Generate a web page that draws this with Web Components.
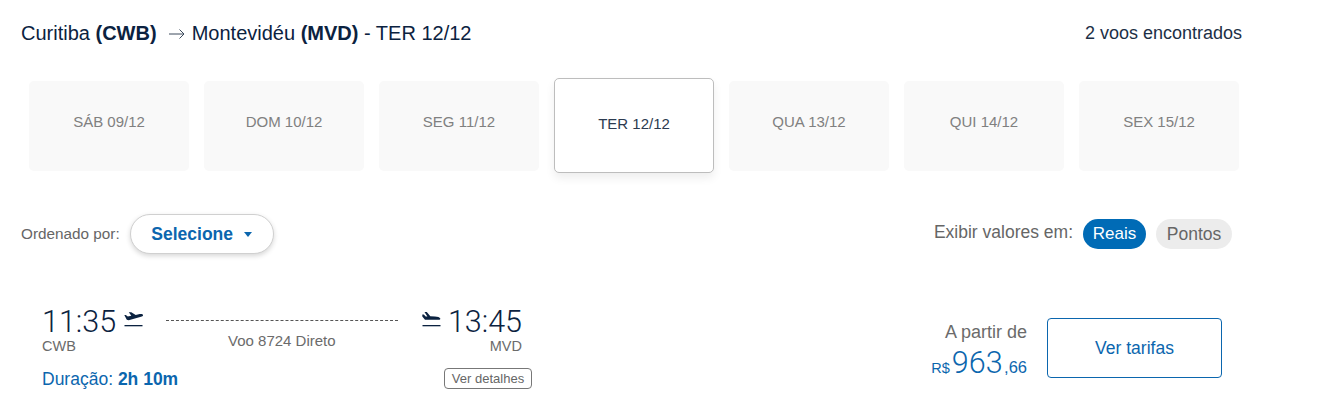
<!DOCTYPE html>
<html lang="pt-BR">
<head>
<meta charset="utf-8">
<title>Voos</title>
<style>
    html, body { margin: 0; background: #fff; }
    body { font-family: 'Liberation Sans', Arial, sans-serif; color: #0b2240; width: 1317px; height: 406px; overflow: hidden; }
    flight-page { display: block; }
</style>
</head>
<body>
<flight-page>
    <route-header count="2 voos encontrados">
        Curitiba <b>(CWB)</b> <arrow-icon></arrow-icon> Montevidéu <b>(MVD)</b> - TER 12/12
    </route-header>
    <date-strip>
        <date-tab>SÁB 09/12</date-tab>
        <date-tab>DOM 10/12</date-tab>
        <date-tab>SEG 11/12</date-tab>
        <date-tab active>TER 12/12</date-tab>
        <date-tab>QUA 13/12</date-tab>
        <date-tab>QUI 14/12</date-tab>
        <date-tab>SEX 15/12</date-tab>
    </date-strip>
    <filter-bar></filter-bar>
    <flight-card dep="11:35" arr="13:45" from="CWB" to="MVD" info="Voo 8724 Direto" duration="2h 10m" price="963" cents=",66"></flight-card>
</flight-page>

<script>
const plane_svg = (landing) => `
    <svg width="19" height="15" viewBox="0 0 19 15" aria-hidden="true">
        <path fill="#0b2240" d="${landing
            ? 'M2.500 0h2.300l3.500 4.200 4.600.3c2.600.2 5 .8 5.400 1.900.2.900-.5 1.300-1.700 1.300H3L.3 4.500V2.600h1.500l1.900 1.800h1.700z'
            : 'M.3 3h1.500l2 1.500 3.500-.7L4.800.2h2.500l4.400 2.800 4.100-.9c1.600-.3 3 0 3.200.9.200.9-.6 1.400-2 1.800L4.700 8.300 2.800 7.800z'}"/>
        <rect x="0.500" y="13" width="18" height="1.300" fill="#0b2240"/>
    </svg>`;

class ArrowIcon extends HTMLElement {
    constructor() {
        super();
        this.attachShadow({mode: 'open'});
        this.shadowRoot.innerHTML = `
            <style>
                :host { display: inline-block; width: 17px; height: 12px; margin: 0 1px 0 6px; }
                svg { display: block; }
            </style>
            <svg width="17" height="12" viewBox="0 0 17 12" aria-hidden="true">
                <path d="M1 6h15M11.500 1.500 16 6l-4.500 4.500" fill="none" stroke="#3c4a5c" stroke-width="1"/>
            </svg>`;
    }
}

class RouteHeader extends HTMLElement {
    constructor() {
        super();
        this.attachShadow({mode: 'open'});
        this.shadowRoot.innerHTML = `
            <style>
                :host { display: flex; justify-content: space-between; align-items: center; height: 66px; padding: 0 75px 0 21px; font-size: 20px; color: #0b2240; }
                #count { font-size: 18px; color: #1c2f46; }
            </style>
            <div><slot></slot></div>
            <div id="count"></div>`;
    }
    connectedCallback() {
        this.shadowRoot.getElementById('count').innerText = this.getAttribute('count');
    }
}

class DateStrip extends HTMLElement {
    constructor() {
        super();
        this.attachShadow({mode: 'open'});
        this.shadowRoot.innerHTML = `
            <style>
                :host { display: flex; align-items: center; gap: 15px; height: 95px; padding: 12px 0 0 29px; }
            </style>
            <slot></slot>`;
    }
}

class DateTab extends HTMLElement {
    constructor() {
        super();
        this.attachShadow({mode: 'open'});
        this.shadowRoot.innerHTML = `
            <style>
                :host { display: flex; justify-content: center; align-items: center; box-sizing: border-box; width: 160px; height: 90px; padding-bottom: 8px; background: #f9f9f9; border-radius: 5px; font-size: 15px; color: #808080; }
                :host([active]) { height: 95px; padding-bottom: 4px; background: #fff; border: 1px solid #bdbdbd; color: #2c3b50; box-shadow: 0 5px 10px rgba(0,0,0,.07); }
            </style>
            <slot></slot>`;
    }
}

class FilterBar extends HTMLElement {
    constructor() {
        super();
        this.attachShadow({mode: 'open'});
        this.shadowRoot.innerHTML = `
            <style>
                :host { display: flex; justify-content: space-between; align-items: center; height: 40px; margin-top: 41px; padding: 0 85px 0 21px; font-size: 15.300px; color: #666; }
                .side { display: flex; align-items: center; }
                #select { display: flex; align-items: center; justify-content: center; gap: 11px; box-sizing: border-box; width: 144px; height: 40px; margin-left: 10px; border: 1px solid #d0d0d0; border-radius: 20px; background: #fff; box-shadow: 0 2px 5px rgba(0,0,0,.16); color: #0b66ae; font-size: 17.500px; font-weight: 700; }
                #caret { width: 0; height: 0; border: 4.500px solid transparent; border-top: 5px solid #0b66ae; border-bottom: 0; }
                #show { font-size: 17.500px; margin-top: -4px; margin-right: 10px; }
                .pill { display: flex; align-items: center; justify-content: center; height: 30px; border-radius: 15px; font-size: 17.500px; }
                #reais { width: 63px; font-size: 17px; background: #006bb6; color: #fff; }
                #pontos { width: 76px; margin-left: 10px; background: #ececec; color: #666; }
            </style>
            <div class="side">
                <span>Ordenado por:</span>
                <div id="select">Selecione <span id="caret"></span></div>
            </div>
            <div class="side">
                <span id="show">Exibir valores em:</span>
                <div class="pill" id="reais">Reais</div>
                <div class="pill" id="pontos">Pontos</div>
            </div>`;
    }
}

class FlightCard extends HTMLElement {
    constructor() {
        super();
        this.attachShadow({mode: 'open'});
        this.shadowRoot.innerHTML = `
            <style>
                :host { display: flex; justify-content: space-between; height: 100px; margin-top: 51px; padding: 0 95px 0 42px; }
                #left { width: 490px; display: flex; flex-direction: column; }
                #times { display: flex; align-items: center; height: 33px; }
                .time { font-family: Roboto, sans-serif; font-weight: 300; font-size: 30.500px; line-height: 32px; color: #0b2240; }
                svg { display: block; }
                #dep-icon { margin: -4px 0 0 8px; }
                #arr-icon { margin: -4px 7px 0 0; }
                #line { flex: 1; border-top: 1px dashed #555; margin: -3px 24px 0 23px; }
                #labels { display: flex; justify-content: space-between; align-items: center; height: 16px; font-size: 14.500px; color: #6b6b6b; }
                #info { font-size: 15px; margin: -12px 2px 0 0; }
                #to { margin-right: 10px; }
                #bottom { display: flex; justify-content: space-between; align-items: center; margin-top: 12px; height: 24px; }
                #duration { font-size: 17.500px; margin-top: 2px; color: #0b66ae; }
                #details { box-sizing: border-box; height: 21px; width: 88px; text-align: center; border: 1px solid #777; border-radius: 4px; font-size: 13px; line-height: 19px; color: #666; }
                #right { display: flex; align-items: flex-start; padding-top: 13px; }
                #price { text-align: right; margin-right: 20px; }
                #from-label { font-size: 18px; color: #6b6b6b; line-height: 20px; margin-top: 4px; }
                #amount { color: #0b66ae; line-height: 34px; font-size: 14.500px; margin-top: 4px; }
                #value { font-family: Roboto, sans-serif; font-weight: 300; font-size: 30.500px; margin: 0 1.500px 0 2px; }
                #cents { font-size: 16.500px; }
                #tarifas { display: flex; justify-content: center; align-items: center; box-sizing: border-box; width: 175px; height: 60px; border: 1px solid #0b66ae; border-radius: 4px; color: #0b66ae; font-size: 17.500px; }
            </style>
            <div id="left">
                <div id="times">
                    <span class="time" id="dep"></span>
                    <span id="dep-icon">${plane_svg(false)}</span>
                    <span id="line"></span>
                    <span id="arr-icon">${plane_svg(true)}</span>
                    <span class="time" id="arr"></span>
                    <span style="width:10px"></span>
                </div>
                <div id="labels">
                    <span id="from"></span>
                    <span id="info"></span>
                    <span id="to"></span>
                </div>
                <div id="bottom">
                    <div id="duration">Duração: <b id="dur"></b></div>
                    <div id="details">Ver detalhes</div>
                </div>
            </div>
            <div id="right">
                <div id="price">
                    <div id="from-label">A partir de</div>
                    <div id="amount">R$<span id="value"></span><span id="cents"></span></div>
                </div>
                <div id="tarifas">Ver tarifas</div>
            </div>`;
    }
    connectedCallback() {
        const root = this.shadowRoot;
        root.getElementById('dep').innerText = this.getAttribute('dep');
        root.getElementById('arr').innerText = this.getAttribute('arr');
        root.getElementById('from').innerText = this.getAttribute('from');
        root.getElementById('to').innerText = this.getAttribute('to');
        root.getElementById('info').innerText = this.getAttribute('info');
        root.getElementById('dur').innerText = this.getAttribute('duration');
        root.getElementById('value').innerText = this.getAttribute('price');
        root.getElementById('cents').innerText = this.getAttribute('cents');
    }
}

window.customElements.define('arrow-icon', ArrowIcon);
window.customElements.define('route-header', RouteHeader);
window.customElements.define('date-strip', DateStrip);
window.customElements.define('date-tab', DateTab);
window.customElements.define('filter-bar', FilterBar);
window.customElements.define('flight-card', FlightCard);
</script>
</body>
</html>
